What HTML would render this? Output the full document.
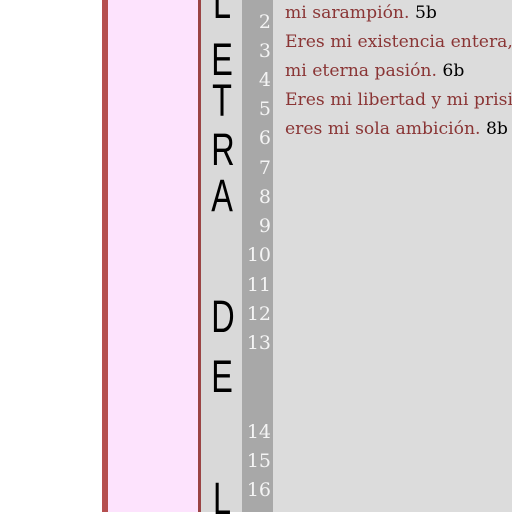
<!DOCTYPE html>
<html><head><style>
html,body{margin:0;padding:0;}
body{width:512px;height:512px;position:relative;overflow:hidden;background:#fff;}
.a{position:absolute;}
.big{position:absolute;left:207px;width:30px;text-align:center;font-family:"Liberation Sans",sans-serif;font-size:45px;line-height:45px;color:#000;transform:scaleX(0.72);}
.n{position:absolute;left:238px;width:33px;text-align:right;font-family:"DejaVu Serif",serif;font-size:19px;color:#f4f4f4;line-height:20px;}
.t{position:absolute;left:285px;font-family:"DejaVu Serif",serif;font-size:17.2px;color:#8a3535;white-space:nowrap;line-height:20px;}
.t b{font-weight:normal;color:#000;}
</style></head><body>
<div class="a" style="left:102px;top:0;width:6px;height:512px;background:#b54f4f"></div>
<div class="a" style="left:108px;top:0;width:90px;height:512px;background:#fde3fd"></div>
<div class="a" style="left:198px;top:0;width:3px;height:512px;background:#9a4444"></div>
<div class="a" style="left:201px;top:0;width:41px;height:512px;background:#d9d9d9"></div>
<div class="a" style="left:242px;top:0;width:31px;height:512px;background:#a8a8a8"></div>
<div class="a" style="left:273px;top:0;width:239px;height:512px;background:#dcdcdc"></div>

<div class="big" style="top:-20px">L</div>
<div class="big" style="top:37px">E</div>
<div class="big" style="top:78px">T</div>
<div class="big" style="top:127px">R</div>
<div class="big" style="top:173px">A</div>
<div class="big" style="top:294px">D</div>
<div class="big" style="top:354px">E</div>
<div class="big" style="top:476px">L</div>

<div class="n" style="top:12px">2</div>
<div class="n" style="top:41px">3</div>
<div class="n" style="top:70px">4</div>
<div class="n" style="top:99px">5</div>
<div class="n" style="top:128px">6</div>
<div class="n" style="top:158px">7</div>
<div class="n" style="top:187px">8</div>
<div class="n" style="top:216px">9</div>
<div class="n" style="top:245px">10</div>
<div class="n" style="top:275px">11</div>
<div class="n" style="top:304px">12</div>
<div class="n" style="top:333px">13</div>
<div class="n" style="top:422px">14</div>
<div class="n" style="top:451px">15</div>
<div class="n" style="top:480px">16</div>

<div class="t" style="top:3px">mi sarampión. <b>5b</b></div>
<div class="t" style="top:32px">Eres mi existencia entera,</div>
<div class="t" style="top:61px">mi eterna pasión. <b>6b</b></div>
<div class="t" style="top:90px">Eres mi libertad y mi prisión</div>
<div class="t" style="top:119px">eres mi sola ambición. <b>8b</b></div>
</body></html>
